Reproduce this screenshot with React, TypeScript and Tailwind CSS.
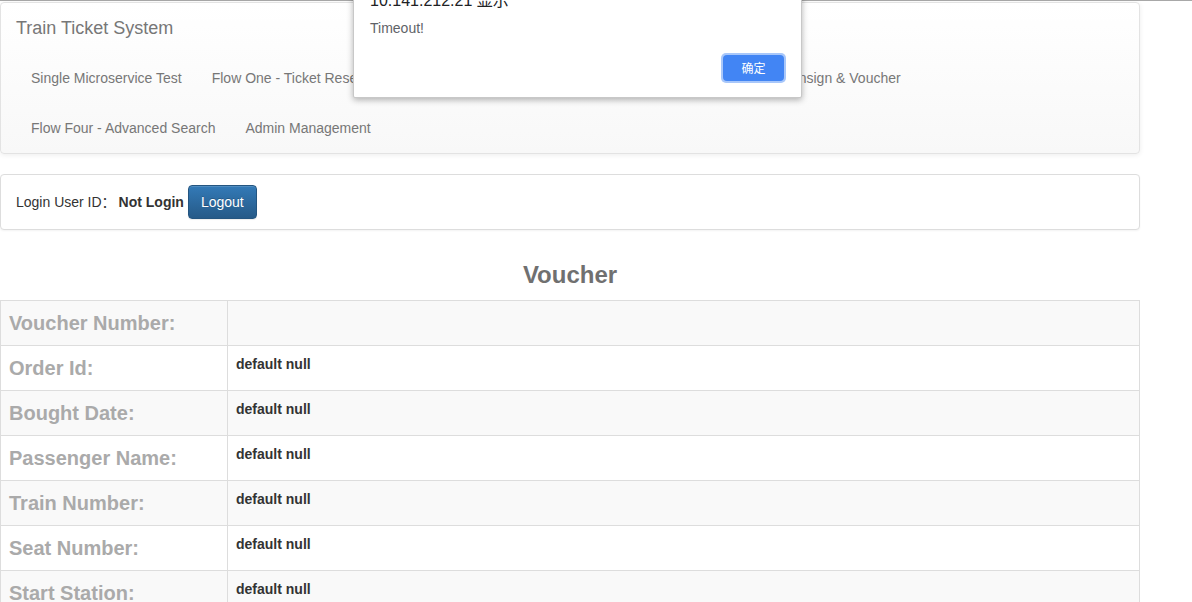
import React from "react";

const rows: { label: string; value: string }[] = [
  { label: "Voucher Number:", value: "" },
  { label: "Order Id:", value: "default null" },
  { label: "Bought Date:", value: "default null" },
  { label: "Passenger Name:", value: "default null" },
  { label: "Train Number:", value: "default null" },
  { label: "Seat Number:", value: "default null" },
  { label: "Start Station:", value: "default null" },
  { label: "End Station:", value: "default null" },
  { label: "Price:", value: "default null" },
];

const navRow1 = [
  "Single Microservice Test",
  "Flow One - Ticket Reserve",
  "Flow Two - Ticket Cancel & Ticket Change",
  "Flow Three - Consign & Voucher",
];
const navRow2 = ["Flow Four - Advanced Search", "Admin Management"];

export default function App() {
  return (
    <div
      className="relative h-[602px] w-[1192px] overflow-hidden bg-white text-[14px] text-[#333]"
      style={{ fontFamily: '"Liberation Sans", Arial, "Noto Sans CJK SC", sans-serif' }}
    >
      <div className="h-px w-full bg-[#a8a8a8]" />
      <div className="mt-px w-[1140px]">
        {/* navbar */}
        <div className="mb-[20px] rounded-[4px] border border-[#e3e3e3] bg-gradient-to-b from-white to-[#f8f8f8] shadow-[0_1px_5px_rgba(0,0,0,0.075)]">
          <div className="flex h-[50px] items-center px-[15px] text-[18px] leading-[20px] text-[#777]">
            Train Ticket System
          </div>
          <div className="flex h-[50px] items-center pl-[15px]">
            {navRow1.map((t) => (
              <span key={t} className="whitespace-nowrap px-[15px] leading-[20px] text-[#777]">
                {t}
              </span>
            ))}
          </div>
          <div className="flex h-[50px] items-center pl-[15px]">
            {navRow2.map((t) => (
              <span key={t} className="whitespace-nowrap px-[15px] leading-[20px] text-[#777]">
                {t}
              </span>
            ))}
          </div>
        </div>

        {/* login panel */}
        <div className="rounded-[4px] border border-[#ddd] bg-white shadow-[0_1px_2px_rgba(0,0,0,0.05)]">
          <div className="flex items-center px-[15px] py-[10px] leading-[20px]">
            <span>Login User ID：</span>
            <span className="ml-[3px] font-bold">Not Login</span>
            <button className="ml-[4px] rounded-[4px] border border-[#245580] bg-gradient-to-b from-[#337ab7] to-[#265a88] px-[12px] py-[6px] text-[14px] leading-[20px] text-white shadow-[inset_0_1px_0_rgba(255,255,255,0.15),0_1px_1px_rgba(0,0,0,0.075)] [text-shadow:0_-1px_0_rgba(0,0,0,0.2)]">
              Logout
            </button>
          </div>
        </div>

        {/* heading */}
        <h3 className="mt-[32px] mb-[12px] text-center text-[24px] font-bold leading-[26px] text-[#707070]">
          Voucher
        </h3>

        {/* table */}
        <table className="w-full border-collapse border border-[#ddd]">
          <tbody>
            {rows.map((r, i) => (
              <tr key={r.label} className={i % 2 === 0 ? "bg-[#f9f9f9]" : "bg-white"}>
                <td className="w-[227px] border border-[#ddd] px-[8px] py-[8px] align-middle text-[20px] font-bold leading-[28px] text-[#aaa]">
                  {r.label}
                </td>
                <td className="border border-[#ddd] px-[8px] py-[8px] align-top text-[14px] font-bold leading-[20px] text-[#333]">
                  {r.value}
                </td>
              </tr>
            ))}
          </tbody>
        </table>
      </div>

      {/* alert dialog */}
      <div className="absolute left-[353px] top-[-26px] w-[449px] rounded-b-[2px] border border-[#c8c8c8] bg-white px-[15px] pb-[14px] pt-[16px] shadow-[0_2px_6px_rgba(0,0,0,0.3)]">
        <div className="pl-[1px] text-[16px] leading-[20px] text-[#202124]">10.141.212.21 显示</div>
        <div className="mt-[9px] pl-[1px] text-[14px] leading-[16px] text-[#5f6368]">Timeout!</div>
        <div className="mt-[17px] flex justify-end">
          <div className="rounded-[5px] bg-[#a8c7fa] p-[2px]">
            <button
              className="flex h-[26px] w-[61px] items-center justify-center rounded-[4px] bg-[#4285f4] text-[12px] text-white"
              style={{ fontFamily: '"Noto Sans CJK SC", sans-serif' }}
            >
              确定
            </button>
          </div>
        </div>
      </div>
    </div>
  );
}
